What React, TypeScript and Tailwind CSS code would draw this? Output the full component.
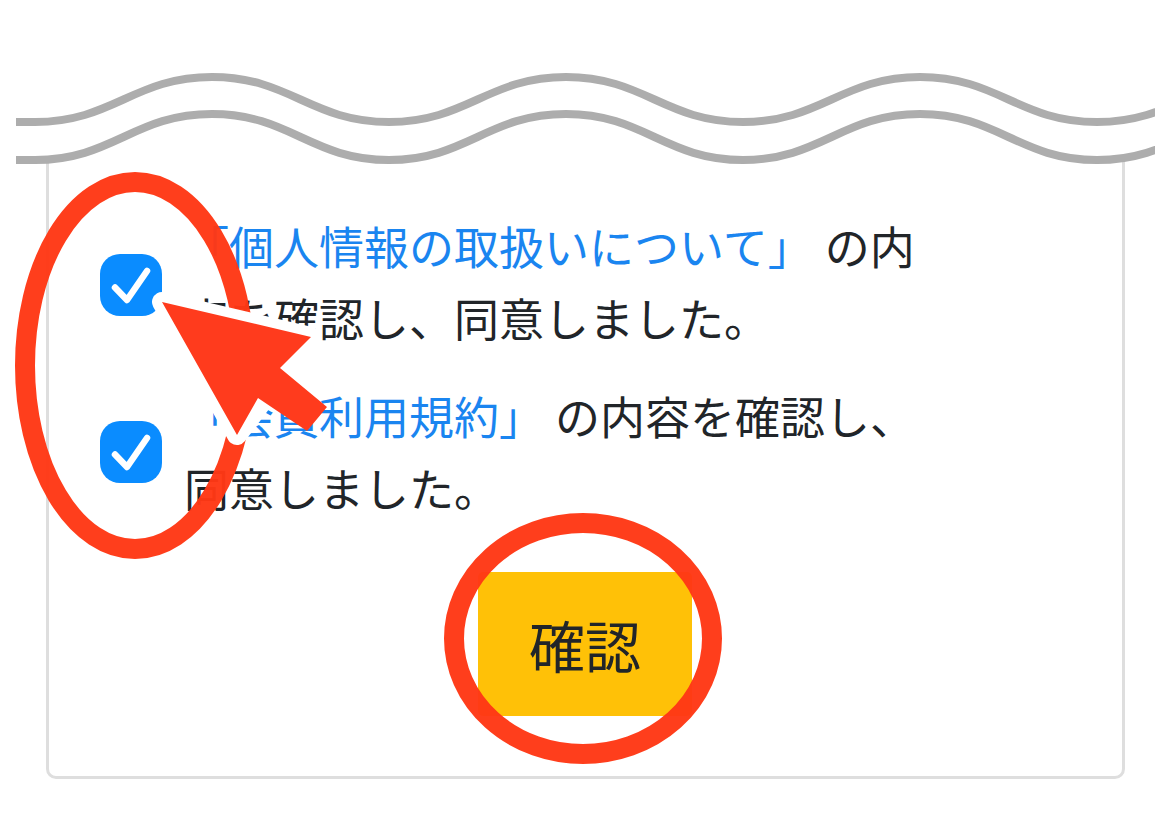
import React from "react";

const wave = (y: number, amp: number) => {
  const x0 = 35;
  const half = 177;
  let d = `M16 ${y} L${x0} ${y}`;
  for (let i = 0; i < 8; i++) {
    const sx = x0 + i * half;
    const ey = i % 2 === 0 ? y - amp : y;
    const sy = i % 2 === 0 ? y : y - amp;
    d += ` C${sx + 78} ${sy} ${sx + 99} ${ey} ${sx + half} ${ey}`;
  }
  return d;
};

function Check({ className }: { className: string }) {
  return (
    <div className={`w-[62px] h-[62px] shrink-0 rounded-[20px] bg-[#0a8cff] flex items-center justify-center ${className}`}>
      <svg width="62" height="62" viewBox="0 0 62 62" fill="none">
        <path d="M15 33.5 L27 46 L47 17" stroke="#fff" strokeWidth="6.5" strokeLinecap="round" strokeLinejoin="round" />
      </svg>
    </div>
  );
}

export default function App() {
  return (
    <div
      className="relative w-[1170px] h-[815px] overflow-hidden bg-white text-[#212529]"
      style={{ fontFamily: '"Noto Sans CJK JP", "Noto Sans", sans-serif' }}
    >
      <div className="ml-[46px] mt-[100px] w-[1079px] h-[679px] border-[3px] border-[#dedede] rounded-[10px] pt-[107px] pl-[51px] flex flex-col">
        <div className="flex items-center gap-[22px]">
          <Check className="mt-[6px]" />
          <p className="w-[750px] text-[45px] leading-[72px]">
            <a className="text-[#1a85f0] mr-[2px]">「個人情報の取扱いについて」</a> の内容を確認し、同意しました。
          </p>
        </div>
        <div className="flex items-center gap-[22px] mt-[26px]">
          <Check className="" />
          <p className="w-[750px] text-[45px] leading-[72px]">
            <a className="text-[#1a85f0] mr-[1px]">「会員利用規約」</a> の内容を確認し、同意しました。
          </p>
        </div>
        <button className="mt-[48px] ml-[378px] w-[214px] h-[144px] bg-[#ffc107] rounded-[5px] text-[56px] leading-none text-[#212529]">
          確認
        </button>
      </div>

      <svg className="absolute inset-0" width="1170" height="815" viewBox="0 0 1170 815" fill="none">
        <defs>
          <clipPath id="wave-clip">
            <rect x="16" y="0" width="1139" height="815" />
          </clipPath>
        </defs>
        <g clipPath="url(#wave-clip)">
          <path d={`${wave(160, 46)} L1170 0 L0 0 Z`} fill="#fff" stroke="none" />
          <path d={wave(122, 45)} stroke="#adadad" strokeWidth="8" />
          <path d={wave(160, 46)} stroke="#adadad" strokeWidth="8" />
        </g>
        <ellipse cx="135" cy="365.5" rx="110" ry="183.5" stroke="#ff3815" strokeWidth="20" opacity="0.97" />
        <ellipse cx="583" cy="638.5" rx="129" ry="115.5" stroke="#ff3815" strokeWidth="20" opacity="0.97" />
        <path d="M162 302 L311 337 L237 435 Z" fill="#fff" stroke="#fff" strokeWidth="20" strokeLinejoin="round" />
        <path d="M162 302 L311 337 L280 368 L327 407 L307 431 L258 398 L237 435 Z" fill="#ff3b1d" />
      </svg>
    </div>
  );
}
